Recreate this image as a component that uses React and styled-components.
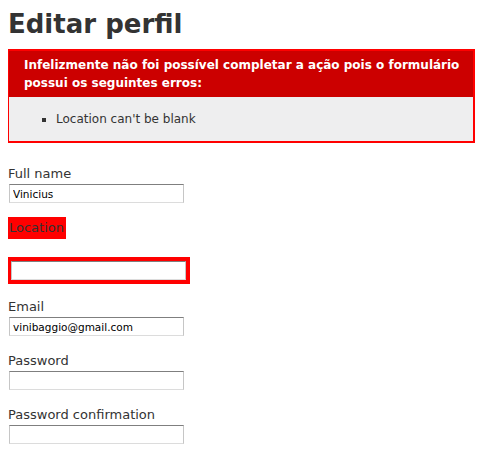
import React from 'react';
import styled, { createGlobalStyle } from 'styled-components';

const GlobalStyle = createGlobalStyle`
  body {
    margin: 8px;
    background: #fff;
    color: #333;
    font-family: "DejaVu Sans", Verdana, sans-serif;
    font-size: 13px;
    line-height: 18px;
  }
`;

const Title = styled.h1`
  margin: 0 0 9px;
  font-size: 26px;
  line-height: 32px;
  font-weight: bold;
  color: #333;
`;

const ErrorBox = styled.div`
  width: 450px;
  margin: 0 0 20px -1px;
  border: 2px solid #f00;
  padding: 7px 7px 0;
  background: #eeeeef;
`;

const ErrorHeader = styled.h2`
  margin: -7px -7px 0;
  padding: 5px 5px 5px 15px;
  font-size: 12px;
  line-height: 18px;
  font-weight: bold;
  background: #c00;
  color: #fff;
`;

const ErrorList = styled.ul`
  margin: 13px 0;
  padding-left: 40px;
  font-size: 12px;
  line-height: 18px;
  list-style: square;
`;

const Field = styled.div`
  display: flex;
  flex-direction: column;
  align-items: flex-start;
  margin-bottom: ${(p) => p.$gap || 14}px;
`;

const Label = styled.label`
  display: block;
  padding-top: 2px;
  height: 18px;
`;

const ErrorLabel = styled.label`
  display: block;
  margin-left: -1px;
  padding: 2px;
  background: #f00;
  color: #333;
  margin-bottom: 18px;
`;

const Input = styled.input`
  box-sizing: border-box;
  width: 175px;
  height: 19px;
  margin: 1px 0 0 1px;
  padding: 0 3px;
  border: 1px solid #c6c6c6;
  border-top-color: #7f7f7f;
  border-bottom-color: #dcdcdc;
  background: #fff;
  color: #000;
  font-family: "DejaVu Sans", Verdana, sans-serif;
  font-size: 10.5px;
  outline: none;
`;

const ErrorWrap = styled.div`
  margin-left: -1px;
  padding: 4px;
  background: #f00;

  ${Input} {
    margin: 0;
  }
`;

export default function App() {
  return (
    <>
      <GlobalStyle />
      <Title>Editar perfil</Title>
      <ErrorBox>
        <ErrorHeader>
          Infelizmente não foi possível completar a ação pois o formulário possui os seguintes erros:
        </ErrorHeader>
        <ErrorList>
          <li>Location can't be blank</li>
        </ErrorList>
      </ErrorBox>

      <Field>
        <Label>Full name</Label>
        <Input type="text" defaultValue="Vinicius" />
      </Field>

      <Field $gap={12}>
        <ErrorLabel>Location</ErrorLabel>
        <ErrorWrap>
          <Input type="text" defaultValue="" />
        </ErrorWrap>
      </Field>

      <Field>
        <Label>Email</Label>
        <Input type="text" defaultValue="vinibaggio@gmail.com" />
      </Field>

      <Field>
        <Label>Password</Label>
        <Input type="password" defaultValue="" />
      </Field>

      <Field>
        <Label>Password confirmation</Label>
        <Input type="password" defaultValue="" />
      </Field>
    </>
  );
}
